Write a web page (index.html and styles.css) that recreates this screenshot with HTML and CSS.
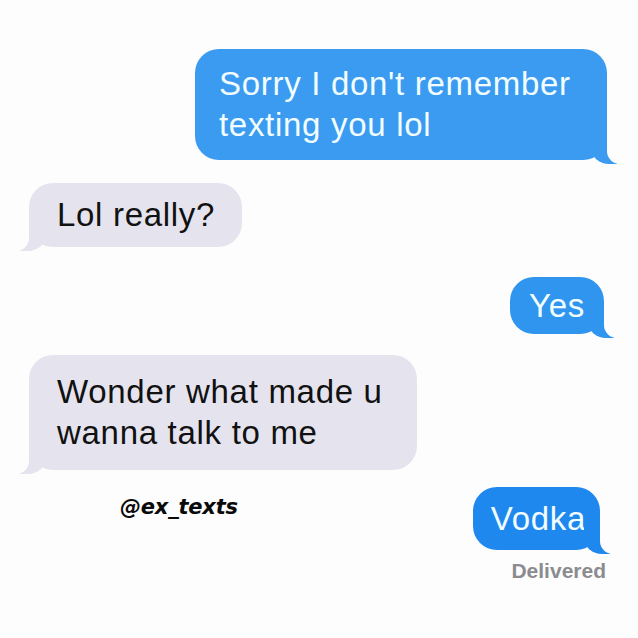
FILE: index.html
```html
<!DOCTYPE html>
<html>
<head>
    <title>Messages</title>
    <link rel="stylesheet" href="styles.css">
</head>
<body>
    <div class="thread">
        <div class="row out first">
            <div class="bubble sent wide">Sorry I don't remember texting you lol</div>
        </div>

        <div class="row in second">
            <div class="bubble received">Lol really?</div>
        </div>

        <div class="row out third">
            <div class="bubble sent short">Yes</div>
        </div>

        <div class="row in fourth">
            <div class="bubble received tall">Wonder what made u wanna talk to me</div>
        </div>

        <div class="row last">
            <div class="handle">@ex_texts</div>
            <div class="bubble sent vodka">Vodka</div>
        </div>

        <div class="status">Delivered</div>
    </div>
</body>
</html>
```

FILE: styles.css
```css
body {
    margin: 0;
    width: 638px;
    height: 638px;
    background-color: #fdfdfd;
    font-family: "Liberation Sans", Arial, sans-serif;
    overflow: hidden;
}

.thread {
    display: flex;
    flex-direction: column;
    padding-top: 49px;
}

.row {
    display: flex;
}

.row.out {
    justify-content: flex-end;
}

.row.in {
    justify-content: flex-start;
    padding-left: 29px;
}

.first {
    padding-right: 31px;
}

.second {
    margin-top: 23px;
}

.third {
    margin-top: 30px;
    padding-right: 34px;
}

.fourth {
    margin-top: 21px;
}

.last {
    margin-top: 17px;
    justify-content: space-between;
    align-items: flex-start;
    padding-left: 120px;
    padding-right: 38px;
}

/* bubbles */
.bubble {
    position: relative;
    box-sizing: border-box;
    font-size: 33px;
    line-height: 41px;
    letter-spacing: 0.7px;
    border-radius: 24px;
}

.sent {
    background-color: #3a9bf1;
    color: #f2fdff;
    padding: 8px 19px;
}

.received {
    background-color: #e5e4ee;
    color: #111;
    padding: 11px 27px 12px 28px;
}

.wide {
    max-width: 412px;
    padding: 14px 30px 15px 24px;
}

.short {
    background-color: #2f95ef;
}

.tall {
    max-width: 388px;
    padding: 16px 25px 17px 28px;
}

.vodka {
    background-color: #1f88ef;
    padding: 11px 14px 11px 18px;
}

/* bubble tails: a coloured block carved by a page-coloured block */
.sent::before,
.sent::after,
.received::before,
.received::after {
    content: "";
    position: absolute;
    bottom: -4px;
    height: 28px;
}

.sent::before {
    right: -10px;
    width: 26px;
    background-color: inherit;
    border-bottom-left-radius: 18px 16px;
}

.sent::after {
    right: -32px;
    width: 32px;
    background-color: #fdfdfd;
    border-bottom-left-radius: 13px;
}

.received::before {
    left: -9px;
    width: 26px;
    background-color: inherit;
    border-bottom-right-radius: 18px 16px;
}

.received::after {
    left: -32px;
    width: 32px;
    background-color: #fdfdfd;
    border-bottom-right-radius: 13px;
}

.handle {
    margin-top: 8px;
    font-family: "DejaVu Sans", sans-serif;
    font-weight: bold;
    font-style: italic;
    font-size: 21px;
    letter-spacing: -0.2px;
    color: #0a0a0a;
}

.status {
    align-self: flex-end;
    margin-top: 9px;
    padding-right: 32px;
    font-size: 21px;
    font-weight: bold;
    color: #8b8b90;
}
```
